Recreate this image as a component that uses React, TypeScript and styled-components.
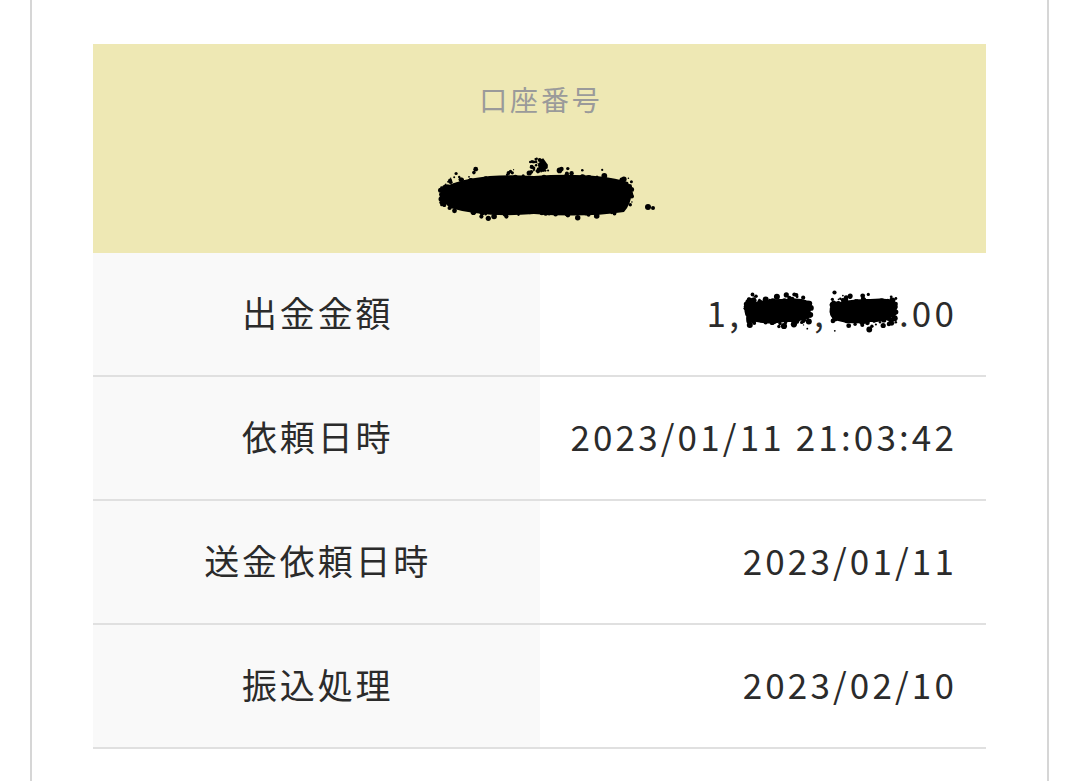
import React from "react";
import styled, { createGlobalStyle } from "styled-components";

const GlobalStyle = createGlobalStyle`
  html, body { margin: 0; padding: 0; background: #ffffff; }
  body { font-family: "Noto Sans CJK JP", "Noto Sans", sans-serif; color: #2b2b2b; }
  * { box-sizing: border-box; }
`;

const Page = styled.div`
  padding: 0 30px;
`;

const Card = styled.div`
  border-left: 2px solid #d6d6d6;
  border-right: 2px solid #d6d6d6;
  min-height: 781px;
  padding: 44px 61px 0;
`;

const AccountBox = styled.div`
  background: #eee8b4;
  height: 209px;
  display: flex;
  flex-direction: column;
  align-items: center;
  padding-top: 34px;
`;

const AccountLabel = styled.div`
  font-size: 28px;
  line-height: 42px;
  letter-spacing: 0.1em;
  color: #9a9a9a;
  padding-left: 0.1em;
`;

const AccountValue = styled.div`
  margin-top: 34px;
  margin-left: 14px;
  display: flex;
`;

const Table = styled.div`
  display: flex;
  flex-direction: column;
`;

const Row = styled.div`
  display: grid;
  grid-template-columns: 1fr 1fr;
  height: 124px;
  border-bottom: 2px solid #e0e0e0;
`;

const LabelCell = styled.div`
  background: #f9f9f9;
  display: flex;
  align-items: center;
  justify-content: center;
  padding-bottom: 5px;
  font-size: 35px;
  letter-spacing: 0.08em;
  padding-left: 0.08em;
  color: #2b2b2b;
`;

const ValueCell = styled.div`
  display: flex;
  align-items: center;
  justify-content: flex-end;
  padding-right: 29px;
  padding-bottom: 5px;
  font-size: 35px;
  letter-spacing: 0.09em;
  color: #2b2b2b;
`;

const Redact = styled.svg`
  display: block;
`;

function rng(seed: number) {
  let s = seed >>> 0;
  return () => {
    s = (s * 1664525 + 1013904223) >>> 0;
    return s / 4294967296;
  };
}

type ScribbleProps = { w: number; h: number; seed: number; count: number };

const Scribble: React.FC<ScribbleProps> = ({ w, h, seed, count }) => {
  const r = rng(seed);
  const dots: React.ReactElement[] = [];
  for (let i = 0; i < count; i++) {
    const x = 3 + r() * (w - 6);
    const dy = (r() + r() + r() - 1.5) / 1.5;
    const y = h * 0.48 + dy * h * 0.45;
    const rad = 0.7 + r() * 2.4;
    dots.push(<circle key={i} cx={x.toFixed(1)} cy={y.toFixed(1)} r={rad.toFixed(1)} fill="#000" />);
  }
  return (
    <Redact width={w} height={h} viewBox={`0 0 ${w} ${h}`}>
      <path
        d={`M4 ${h * 0.35} Q${w * 0.3} ${h * 0.2} ${w * 0.6} ${h * 0.22} Q${w - 4} ${h * 0.15} ${w - 3} ${h * 0.4} Q${w - 2} ${h * 0.72} ${w * 0.6} ${h * 0.72} Q${w * 0.3} ${h * 0.8} 6 ${h * 0.66} Q0 ${h * 0.5} 4 ${h * 0.35} Z`}
        fill="#000"
      />
      {dots}
    </Redact>
  );
};

const AccountScribble: React.FC = () => {
  const r = rng(7);
  const dots: React.ReactElement[] = [];
  for (let i = 0; i < 1100; i++) {
    const x = 6 + r() * 192;
    const dy = (r() + r() + r() - 1.5) / 1.5;
    const taper = 1 - Math.pow((x - 102) / 100, 4) * 0.5;
    const y = 40 + dy * 30 * taper;
    const rad = 0.6 + r() * 2.3;
    dots.push(<circle key={i} cx={x.toFixed(1)} cy={y.toFixed(1)} r={rad.toFixed(1)} fill="#000" />);
  }
  for (let i = 0; i < 40; i++) {
    const x = 96 + r() * 18;
    const y = 4 + r() * 14;
    dots.push(<circle key={`t${i}`} cx={x.toFixed(1)} cy={y.toFixed(1)} r={(0.6 + r() * 1.4).toFixed(1)} fill="#000" />);
  }
  return (
    <Redact width="225" height="76" viewBox="0 0 225 76">
      <path
        d="M8 34 Q40 18 100 22 Q160 18 194 28 Q202 44 190 58 Q150 64 100 60 Q50 64 16 54 Q4 44 8 34 Z"
        fill="#000"
      />
      <path d="M104 10 l5 -6 l5 7 l-3 6 l-6 -2 z" fill="#000" />
      <circle cx="214" cy="53" r="3" fill="#000" />
      <circle cx="219" cy="54" r="2" fill="#000" />
      {dots}
    </Redact>
  );
};

const Amount: React.FC = () => (
  <>
    <span>1,</span>
    <Scribble w={72} h={46} seed={3} count={260} />
    <span>,</span>
    <Scribble w={72} h={46} seed={11} count={260} />
    <span>.00</span>
  </>
);

const rows: { label: string; value: React.ReactNode }[] = [
  { label: "出金金額", value: <Amount /> },
  { label: "依頼日時", value: "2023/01/11 21:03:42" },
  { label: "送金依頼日時", value: "2023/01/11" },
  { label: "振込処理", value: "2023/02/10" },
];

export default function App() {
  return (
    <>
      <GlobalStyle />
      <Page>
        <Card>
          <AccountBox>
            <AccountLabel>口座番号</AccountLabel>
            <AccountValue>
              <AccountScribble />
            </AccountValue>
          </AccountBox>
          <Table>
            {rows.map((row) => (
              <Row key={row.label}>
                <LabelCell>{row.label}</LabelCell>
                <ValueCell>{row.value}</ValueCell>
              </Row>
            ))}
          </Table>
        </Card>
      </Page>
    </>
  );
}
